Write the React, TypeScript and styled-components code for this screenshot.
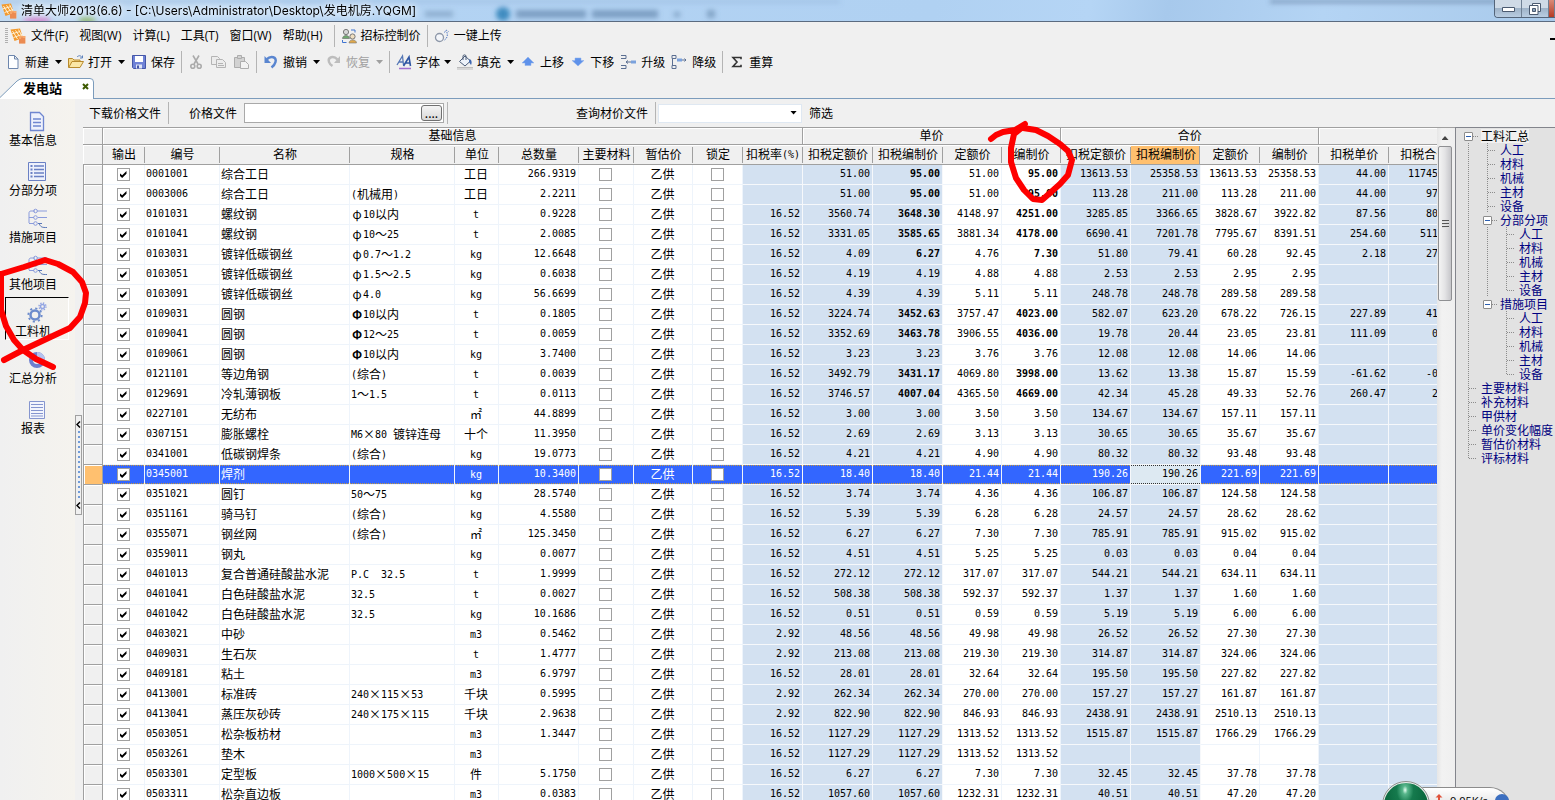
import React from "react";
import styled, { createGlobalStyle, css } from "styled-components";

const CJK = `"Noto Sans CJK SC", "Noto Sans", sans-serif`;
const UI = `"Open Sans", "Noto Sans CJK SC", sans-serif`;
const TITLE = `Inter, "Noto Sans CJK SC", sans-serif`;
const MONO = `"DejaVu Sans Mono", "Noto Sans CJK SC", monospace`;

const GlobalStyle = createGlobalStyle`
  *, *::before, *::after { box-sizing: border-box; }
  body { margin: 0; background: #f0f0f0; color: #000; font: 12px/16px ${CJK}; }
  button, input, select { font: inherit; color: inherit; margin: 0; }
  button { border: 0; padding: 0; background: none; white-space: nowrap; }
`;

const Window = styled.div`
  position: relative;
  display: flex;
  flex-direction: column;
  height: 100vh;
  overflow: hidden;
`;

/* ---------- title bar ---------- */
const TitleBar = styled.header`
  position: relative;
  display: flex;
  flex: none;
  height: 22px;
  overflow: hidden;
  border-bottom: 1px solid #5b6b80;
  background: linear-gradient(100deg, #c3dbf2 0%, #b3d3f3 25%, #b0d1f2 60%, #b5d5f5 70%, #a7c9ec 75%, #b4d4f4 85%, #a9caeb 100%);
`;
const Backdrop = styled.svg`
  position: absolute;
  inset: 0;
  width: 100%;
  height: 22px;
`;
const TitleText = styled.h1`
  position: relative;
  flex: 1;
  display: flex;
  align-items: center;
  gap: 4px;
  margin: 0;
  padding-left: 1px;
  font: 12px/20px ${TITLE};
  text-shadow: 0 0 6px #fff, 0 0 8px #fff;
`;
const WindowButtons = styled.div`
  position: relative;
  display: flex;
  height: 18px;
  border: 1px solid #54657a;
  border-width: 0 0 1px 1px;
  border-radius: 0 0 0 4px;
  overflow: hidden;
`;
const WindowButton = styled.button<{ $close?: boolean }>`
  width: ${(p) => (p.$close ? 6 : 27)}px;
  display: flex;
  align-items: center;
  justify-content: center;
  border-right: 1px solid #6f8094;
  background: ${(p) =>
    p.$close ? "linear-gradient(#d98a78, #b53a24)" : "linear-gradient(#cfdae6 45%, #9fb3c8 50%, #b9cde2)"};
`;

/* ---------- menus and toolbars ---------- */
const MenuBar = styled.nav`
  display: flex;
  flex: none;
  align-items: center;
  gap: 11px;
  height: 27px;
  padding-left: 5px;
  font-family: ${UI};
`;
const MenuLead = styled.span`
  display: flex;
  gap: 2px;
  margin-right: -6px;
`;
const Grip = styled.span`
  width: 3px;
  height: 16px;
  background: repeating-linear-gradient(#b0b0b0 0 1px, transparent 1px 2px);
`;
const MenuItem = styled.button`
  display: flex;
  align-items: center;
  gap: 4px;
  line-height: 18px;
`;
const MenuGroup = styled.span`
  display: flex;
  align-items: center;
  gap: 6px;
`;
const Minimised = styled.span`
  width: 5px;
  height: 2px;
  margin: 6px 0 0 auto;
  background: #000;
`;
const Separator = styled.span<{ $near?: boolean }>`
  flex: none;
  width: 1px;
  height: 22px;
  margin-left: ${(p) => (p.$near ? -4 : 0)}px;
  background: #b4b4b4;
`;
const ToolBar = styled.div`
  display: flex;
  flex: none;
  align-items: center;
  gap: 6px;
  height: 26px;
  margin-bottom: 1px;
  padding-left: 5px;
`;
const Tool = styled.button`
  display: flex;
  align-items: center;
  gap: 4px;
  line-height: 18px;
  &:disabled { color: #a0a0a0; }
`;
const Arrow = styled.span<{ $tight?: boolean }>`
  width: 7px;
  height: 4px;
  margin-left: ${(p) => (p.$tight ? 0 : 2)}px;
  background: currentColor;
  clip-path: polygon(0 0, 7px 0, 50% 4px);
`;

/* ---------- document tab ---------- */
const TabRow = styled.div`
  display: flex;
  flex: none;
  align-items: flex-end;
  height: 23px;
`;
const Tab = styled.div`
  display: grid;
  width: 94px;
  height: 21px;
  & > * { grid-area: 1 / 1; }
`;
const TabFace = styled.div`
  display: flex;
  align-items: center;
  justify-content: space-between;
  padding: 0 5px 2px 23px;
`;
const TabTitle = styled.button`
  font-weight: 700;
  font-size: 13px;
  line-height: 18px;
`;
const TabClose = styled.button`
  display: flex;
  padding-bottom: 3px;
`;
const TabLine = styled.div`
  flex: 1;
  border-bottom: 1px solid #7c9cbc;
`;

/* ---------- body ---------- */
const Body = styled.div`
  display: flex;
  flex: 1;
  min-height: 0;
`;
const SideBar = styled.aside`
  display: flex;
  flex-direction: column;
  flex: none;
  width: 75px;
  padding: 7px 6px 0 5px;
  background: linear-gradient(90deg, #f0f0f0, #f5f3ee);
`;
const SideItem = styled.button<{ $active?: boolean; $spaced?: boolean }>`
  display: flex;
  flex-direction: column;
  align-items: center;
  justify-content: flex-end;
  flex: none;
  height: 43px;
  margin-bottom: ${(p) => (p.$spaced ? 7 : 4)}px;
  padding-right: 8px;
  border: 1px solid transparent;
  ${(p) =>
    p.$active &&
    css`
      border-color: #000 #fff #fff #000;
    `}
  & > svg { margin-left: 8px; }
`;
const Splitter = styled.div`
  flex: none;
  width: 8px;
  padding-top: 316px;
`;
const SplitHandle = styled.button`
  display: flex;
  flex-direction: column;
  align-items: center;
  justify-content: space-between;
  width: 7px;
  height: 100px;
  padding: 5px 0;
  border: 1px solid #a0a0a0;
`;
const SplitDots = styled.span`
  width: 2px;
  height: 68px;
  background: repeating-linear-gradient(#6f9bd8 0 2px, transparent 2px 5px);
`;
const Main = styled.main`
  display: flex;
  flex-direction: column;
  flex: 1;
  min-width: 0;
`;
const FilterBar = styled.form`
  display: flex;
  flex: none;
  align-items: center;
  height: 28px;
  padding-left: 6px;
  gap: 7px;
`;
const FileField = styled.span`
  display: flex;
  width: 200px;
  height: 20px;
  border: 1px solid #a9a9a9;
  background: #fff;
`;
const FileInput = styled.input`
  flex: 1;
  min-width: 0;
  border: 0;
  padding: 0 3px;
  background: none;
  outline: 0;
`;
const Browse = styled.button`
  width: 21px;
  margin: 1px;
  border: 1px solid #707070;
  border-radius: 3px;
  background: linear-gradient(#f4f4f4, #d8d8d8);
  line-height: 12px;
`;
const FieldLabel = styled.label<{ $indent?: number }>`
  margin-left: ${(p) => p.$indent || 0}px;
`;
const PlainButton = styled.button`
  line-height: 16px;
`;
const Combo = styled.span`
  display: grid;
  align-items: center;
  width: 144px;
  height: 19px;
  margin-left: -5px;
  & > * { grid-area: 1 / 1; }
`;
const ComboSelect = styled.select`
  width: 100%;
  height: 100%;
  appearance: none;
  border: 1px solid #dfe8f2;
  background: #fff;
`;
const ComboArrow = styled.span`
  justify-self: end;
  width: 9px;
  height: 5px;
  margin-right: 4px;
  background: #000;
  clip-path: polygon(1px 0, 8px 0, 50% 4px);
  pointer-events: none;
`;

/* ---------- grid ---------- */
const GridRow = styled.div`
  display: flex;
  flex: 1;
  min-height: 0;
`;
const GridPane = styled.div`
  flex: 1;
  min-width: 0;
  overflow: hidden;
  border: 1px solid #a0a0a0;
  border-width: 1px 0 0 0;
`;
const Table = styled.table`
  width: 1376px;
  table-layout: fixed;
  border-collapse: separate;
  border-spacing: 0;
  white-space: nowrap;
`;
const GroupHead = styled.th`
  height: 17px;
  padding: 0 0 2px;
  border: 1px solid #a0a0a0;
  border-width: 0 1px 1px 0;
  background: #f0f0f0;
  box-shadow: inset 1px 1px #fff;
  font-weight: 400;
  line-height: 14px;
`;
const Head = styled.th<{ $active?: boolean }>`
  height: 20px;
  padding: 0 0 2px;
  border-bottom: 1px solid #a0a0a0;
  background: #f0f0f0 linear-gradient(#a0a0a0, #a0a0a0) right 2px / 1px 16px no-repeat;
  box-shadow: inset 0 1px #fff;
  font-weight: 400;
  line-height: 17px;
  ${(p) =>
    p.$active &&
    css`
      background: #ffc06f linear-gradient(90deg, #a0a0a0 1px, #f0f0f0 1px) right / 2px 100% no-repeat;
    `}
`;
const Corner = styled(GroupHead)`
  height: 20px;
`;
const Selector = styled.th<{ $on: boolean }>`
  height: 20px;
  padding: 0;
  border: 1px solid #a0a0a0;
  border-width: 0 1px 1px 1px;
  background: ${(p) => (p.$on ? "#ffc06f" : "#f0f0f0")};
  box-shadow: inset 1px 1px #fff;
`;
const BodyRow = styled.tr<{ $on: boolean }>`
  ${(p) => p.$on && "color: #fff;"}
`;
const Cell = styled.td<{
  $align?: string;
  $tint?: boolean;
  $on?: boolean;
  $focus?: boolean;
  $num?: boolean;
  $bold?: boolean;
}>`
  height: 20px;
  padding: 0 2px 2px 1px;
  overflow: hidden;
  border: 1px solid ${(p) => (p.$tint ? "#f6f8fb" : "#eef4fb")};
  border-width: 0 1px 1px 0;
  text-align: ${(p) => p.$align || "left"};
  line-height: 17px;
  background: ${(p) => (p.$tint ? "#d3e1f1" : "#fff")};
  ${(p) =>
    p.$num &&
    css`
      font-family: ${MONO};
      font-size: 10px;
    `}
  ${(p) => p.$bold && "font-weight: 700;"}
  ${(p) =>
    p.$on &&
    css`
      background:
        repeating-linear-gradient(90deg, #c89a3c 0 1px, #3366ff 1px 2px) top / 100% 1px no-repeat,
        repeating-linear-gradient(90deg, #c89a3c 0 1px, #3366ff 1px 2px) bottom / 100% 1px no-repeat,
        #3366ff;
      background-clip: padding-box;
    `}
  ${(p) =>
    p.$focus &&
    css`
      color: #000;
      background:
        repeating-linear-gradient(90deg, #333 0 1px, #dde9f2 1px 2px) top / 100% 1px no-repeat,
        repeating-linear-gradient(90deg, #333 0 1px, #dde9f2 1px 2px) bottom / 100% 1px no-repeat,
        #dde9f2;
    `}
`;
const CheckCell = styled(Cell)`
  padding: 0 1px 0 0;
`;
const Half = styled.span`
  font-family: ${MONO};
  font-size: 10px;
  line-height: 1;
  white-space: pre;
  vertical-align: 1px;
`;
const Full = styled.span<{ $bold?: boolean }>`
  display: inline-block;
  width: 12px;
  line-height: 1;
  text-align: center;
  font-weight: ${(p) => (p.$bold ? 700 : 400)};
`;
const Check = styled.input`
  display: block;
  appearance: none;
  width: 13px;
  height: 13px;
  margin: 0 auto;
  border: 1px solid #a0a0a0;
  background: #fff;
  &:checked::before {
    content: "";
    display: block;
    width: 7px;
    height: 7px;
    margin: 2px;
    background: #000;
    clip-path: polygon(0 28%, 38% 62%, 100% 0, 100% 38%, 38% 100%, 0 66%);
  }
`;

const ScrollBar = styled.div`
  display: flex;
  flex-direction: column;
  align-items: center;
  flex: none;
  width: 18px;
  padding: 8px 3px 0 1px;
  border-top: 1px solid #a0a0a0;
  background: linear-gradient(90deg, #e6e6e6, #f2f2f2 5px, #efefef);
`;
const ScrollArrow = styled.span`
  width: 7px;
  height: 4px;
  margin-bottom: 6px;
  background: #444;
  clip-path: polygon(50% 0, 100% 100%, 0 100%);
`;
const ScrollThumb = styled.div`
  display: flex;
  align-items: center;
  justify-content: center;
  width: 14px;
  height: 155px;
  border: 1px solid #8f9093;
  border-radius: 2px;
  background: linear-gradient(90deg, #f4f4f4, #e3e3e5 50%, #c6c6ca);
`;
const ThumbGrip = styled.span`
  width: 7px;
  height: 8px;
  background: repeating-linear-gradient(#555 0 1px, #ddd 1px 2px, transparent 2px 3px);
`;

/* ---------- tree ---------- */
const TreePane = styled.aside`
  flex: none;
  width: 100px;
  margin-top: 28px;
  padding: 1px 0 0 6px;
  overflow: hidden;
  border: 1px solid #83858c;
  border-width: 1px 0 0 1px;
  background: #e2e2e2;
`;
const TreeList = styled.ul`
  margin: 0;
  padding: 0;
  list-style: none;
`;
const TreeRow = styled.li`
  display: flex;
  height: 14px;
`;
const dotsDown = "repeating-linear-gradient(#8c8c8c 0 1px, transparent 1px 2px)";
const dotsAcross = "repeating-linear-gradient(90deg, #8c8c8c 0 1px, transparent 1px 2px)";
const Guide = styled.span<{ $kind: string }>`
  display: flex;
  align-items: center;
  flex: none;
  width: 19px;
  padding-left: 2px;
  background-repeat: no-repeat;
  ${(p) =>
    p.$kind === "|" && `background-image: ${dotsDown}; background-size: 1px 100%; background-position: 6px 0;`}
  ${(p) =>
    p.$kind === "+" &&
    `background-image: ${dotsDown}, ${dotsAcross}; background-size: 1px 100%, 8px 1px; background-position: 6px 0, 7px 7px;`}
  ${(p) =>
    p.$kind === "L" &&
    `background-image: ${dotsDown}, ${dotsAcross}; background-size: 1px 8px, 8px 1px; background-position: 6px 0, 7px 7px;`}
  ${(p) =>
    p.$kind === "o" &&
    `background-image: ${dotsAcross}; background-size: 6px 1px; background-position: 11px 7px;`}
`;
const Expander = styled.button`
  display: flex;
  align-items: center;
  justify-content: center;
  width: 9px;
  height: 9px;
  border: 1px solid #8c8c8c;
  border-radius: 1px;
  background: #fff;
  &::before { content: ""; width: 5px; height: 1px; background: #2c5fb0; }
`;
const TreeLabel = styled.a<{ $root?: boolean }>`
  color: ${(p) => (p.$root ? "#000" : "#000080")};
  background: ${(p) => (p.$root ? "#f0f0f0" : "none")};
  text-decoration: none;
  white-space: nowrap;
  line-height: 14px;
`;

/* ---------- overlays ---------- */
const PenLayer = styled.svg`
  position: absolute;
  top: 0;
  left: 0;
  width: 1100px;
  height: 400px;
  pointer-events: none;
`;
const NetMeter = styled.div`
  position: absolute;
  right: 43px;
  bottom: -29px;
  display: flex;
  align-items: flex-start;
  width: 130px;
  height: 48px;
`;
const MeterBall = styled.span`
  position: relative;
  flex: none;
  width: 48px;
  height: 48px;
  border: 2px solid #e8ecea;
  border-radius: 50%;
  outline: 1px solid #8a8f8c;
  outline-offset: -1px;
  background: radial-gradient(ellipse at 48% 16%, #e6fff2 0, #58b78c 8%, #157a4d 26%, #0c6a40 60%);
`;
const MeterPill = styled.span`
  display: flex;
  flex: 1;
  gap: 7px;
  height: 40px;
  margin: 6px 8px 0 -12px;
  padding: 5px 0 0 17px;
  border: 1px solid #8c8c8c;
  border-left: 0;
  border-radius: 0 20px 20px 0;
  background: linear-gradient(#fff, #dcdcdc 60%);
  font: 11px/16px "Open Sans", sans-serif;
`;

/* ---------- icons ---------- */
const AppIcon = () => (
  <svg width="16" height="16" viewBox="0 0 16 16">
    <path d="M.5 1.500 10 .5l3 9.500L4.500 13z" fill="#f39a2d" />
    <path d="M2.500 3l5 8M5.500 2.300l5 7.500M8.500 1.600 12 8M1.500 6 10 3.500M3.500 9.500l8.500-3" stroke="#fff0d0" strokeWidth="1" />
    <path d="M9 8h6.500v7.500H9z" fill="#f7a76a" />
    <path d="M10 15.500V11M12 15.500v-6M14 15.500V10" stroke="#e0703a" strokeWidth="1" />
  </svg>
);
const I: Record<string, React.ReactNode> = {
  new: <path d="M3.500 1.500h6l3.500 3.500v9.500H3.500z M9.500 1.500V5H13" fill="#fdfeff" stroke="#6d86ad" />,
  open: (
    <>
      <path d="M.5 13.500v-9h4l1.500 1.500h6v2" fill="#f5d98a" stroke="#b88a2c" />
      <path d="M.7 13.500 4 7.500h11.500l-3.500 6z" fill="#fbe7a6" stroke="#b88a2c" />
      <path d="M9 3c2-2 4-1.500 5 .5M14.500 1.500v2.500h-2.500" fill="none" stroke="#5b80bd" />
    </>
  ),
  save: (
    <>
      <path d="M1.500 1.500h13v13h-12l-1-1z" fill="#6f82d6" stroke="#4456a8" />
      <path d="M4 2h8v6H4z" fill="#fff" />
      <path d="M5 10.500h6v4H5z" fill="#dfe4f5" />
      <path d="M6 11.500h2v3H6z" fill="#4456a8" />
    </>
  ),
  cut: (
    <g fill="none" stroke="#ababab" strokeWidth="1.600">
      <path d="M5 1.500 10 10M11 1.500 6 10" />
      <circle cx="4.800" cy="12.200" r="2" />
      <circle cx="11.200" cy="12.200" r="2" />
    </g>
  ),
  copy: (
    <g fill="#ececec" stroke="#b4b4b4">
      <path d="M1.500 2.500h6l2 2v6h-8z" />
      <path d="M6.500 5.500h6l3 3v5h-9z M8 9.500h5M8 11.500h6" />
    </g>
  ),
  paste: (
    <g fill="#d2d2d2" stroke="#adadad">
      <path d="M1.500 3.500h10v10h-10z" />
      <path d="M4.500 1.500h4v3h-4z" />
      <path d="M7.500 7.500h5l3 3v4h-8z" fill="#f2f2f2" />
    </g>
  ),
  undo: (
    <>
      <path d="M3.500 5.500C8 1 14 3 12.500 8c-.6 2.500-2 4-4 5.500" fill="none" stroke="#5a86d0" strokeWidth="2.500" />
      <path d="M1.500 2v7h6.500z" fill="#5a86d0" />
    </>
  ),
  redo: (
    <>
      <path d="M11.500 5.500C7.500 1 1.500 3 3 8c.6 2 2 3 3.500 4" fill="none" stroke="#bdbdbd" strokeWidth="2.500" />
      <path d="M14 2v7H8z" fill="#bdbdbd" />
    </>
  ),
  font: (
    <>
      <path d="M1 11 6.500 2l1 9M3 8h4" fill="none" stroke="#5577b5" strokeWidth="1.300" />
      <path d="M7.500 12 13 3l1.500 9M9.500 9H14" fill="none" stroke="#2f56a3" strokeWidth="1.600" />
      <path d="M3 14.500h12" stroke="#a06fd0" strokeWidth="1.500" />
    </>
  ),
  fill: (
    <>
      <path d="M2.500 7.500 8 2l5.500 5L8 12z" fill="#eef3fa" stroke="#4c5d78" />
      <path d="M6 6V2c0-1.500 3-1.500 3 0v4" fill="none" stroke="#4c5d78" />
      <path d="M12.500 5c2.500 1 2.500 4 1.500 6l-2-3z" fill="#3d66b0" />
      <path d="M.5 13.500h15M.5 15h15" stroke="#8a8a8a" strokeDasharray="1 1" />
    </>
  ),
  up: <path d="M8 3l6 6h-3v2.500H5V9H2z" fill="#5f92ea" stroke="#8fb0ec" strokeWidth=".5" />,
  down: <path d="M8 12 2 6.500h3V4h6v2.500h3z" fill="#5f92ea" stroke="#8fb0ec" strokeWidth=".5" />,
  promote: (
    <>
      <path d="M1 1.500h5v3H1M1 11.500h5v3H1M6 8h5M8 6.500 6 8l2 1.500" fill="none" stroke="#5b6f92" />
      <path d="M11 6.500h5v3h-5z" fill="#7ba2dd" />
    </>
  ),
  demote: (
    <>
      <path d="M1 1.500h4v3H1zM1 11.500h4v3H1zM1.500 5v6M11 6h4M13.500 4.500 15 6l-1.500 1.500" fill="none" stroke="#5b6f92" />
      <path d="M6 4.500h5v3H6z" fill="#7ba2dd" />
    </>
  ),
  sum: <path d="M12 5.200V3.500H4L8 8l-4 4.500h8v-1.700" fill="none" stroke="#333" strokeWidth="1.600" />,
  people: (
    <>
      <circle cx="5" cy="4" r="2.600" fill="#d8d8d8" stroke="#777" />
      <path d="M1.500 10.500c0-4 7-4 7 0z" fill="#6fa86f" stroke="#666" strokeWidth=".6" />
      <circle cx="11.500" cy="8.500" r="2.600" fill="#f0dfc0" stroke="#777" />
      <path d="M8 15c0-4 7.500-4 7.500 0z" fill="#e0a94c" stroke="#777" strokeWidth=".6" />
      <path d="M10 2h4v2.500M1.500 12v2.500h4" fill="none" stroke="#3f74d0" />
    </>
  ),
  upload: (
    <>
      <circle cx="5.500" cy="9.500" r="4" fill="#f4f6fa" stroke="#8d97a8" strokeWidth="1.300" />
      <path d="M10.500 12c3-2 3.500-5 2-9M10.500 4.500l1.500-2.500 2.500 1.500" fill="none" stroke="#4f78c4" strokeDasharray="1.500 1" />
    </>
  ),
};
const Icon = ({ name, w = 16 }: { name: string; w?: number }) => (
  <svg width={w} height="16" viewBox={`0 0 ${w} 16`}>
    {I[name]}
  </svg>
);

const branch = (
  <g fill="none" stroke="#8a9bdc">
    <path d="M8 3H4c-1.500 0-2 1-2 2v10M2 9.500h5M2 15.500h5M10 3h10M11 9.500h9" />
    <path d="M12 15.500c2 4 3 4 8 4M11 15.500h4" stroke="#5a78b8" />
    <circle cx="8.500" cy="3" r="1.800" />
    <circle cx="8.500" cy="9.500" r="1.800" />
    <circle cx="8.500" cy="15.500" r="1.800" />
  </g>
);
const S: Record<string, React.ReactNode> = {
  page: (
    <g fill="none" stroke="#6f86d0" strokeWidth="1.300">
      <path d="M3.500 1.500h9l4 4v14h-13z" fill="#eef1fc" />
      <path d="M6 8h8M6 11.500h8M6 15h8" />
    </g>
  ),
  list: (
    <g fill="none" stroke="#6a80c4">
      <path d="M1.500 1.500h17v18h-17z" fill="#eef1fc" />
      <path d="M7 5h10M7 8.500h10M7 12h10M7 15.500h10" strokeWidth="1.500" />
      <path d="M3.500 5h2M3.500 8.500h2M3.500 12h2M3.500 15.500h2" strokeWidth="2" />
    </g>
  ),
  branch,
  gears: (
    <g fill="none">
      <circle cx="8" cy="13" r="4.500" stroke="#6d8ccc" strokeWidth="2.500" />
      <circle cx="8" cy="13" r="6.700" stroke="#6d8ccc" strokeWidth="1.800" strokeDasharray="2.200 3.060" />
      <circle cx="15.500" cy="4.500" r="2" stroke="#93a5e2" strokeWidth="1.500" />
      <circle cx="15.500" cy="4.500" r="3.500" stroke="#93a5e2" strokeWidth="1.400" strokeDasharray="1.400 1.350" />
    </g>
  ),
  ring: (
    <g fill="none">
      <circle cx="10" cy="11" r="6" stroke="#6f7fce" strokeWidth="4" />
      <path d="M10 5a6 6 0 0 1 6 6" stroke="#b5c2ee" strokeWidth="4" />
    </g>
  ),
  report: (
    <g stroke="#8595cf">
      <path d="M2.500 2.500h15v17h-15z" fill="#f3f5fd" />
      <path d="M4 5.500h12M4 8.500h12M4 11.500h12M4 14.500h12M4 17h12" />
    </g>
  ),
};

const sideItems = [
  { label: "基本信息", icon: "page", spaced: true },
  { label: "分部分项", icon: "list" },
  { label: "措施项目", icon: "branch" },
  { label: "其他项目", icon: "branch" },
  { label: "工料机", icon: "gears", active: true },
  { label: "汇总分析", icon: "ring", spaced: true },
  { label: "报表", icon: "report" },
];

/* ---------- data ---------- */
const widths = [20, 42, 75, 130, 105, 44, 80, 55, 59, 50, 60, 70, 70, 59, 59, 70, 70, 59, 59, 70, 70];
const heads = [
  "输出", "编号", "名称", "规格", "单位", "总数量", "主要材料", "暂估价", "锁定", "扣税率(%)",
  "扣税定额价", "扣税编制价", "定额价", "编制价", "扣税定额价", "扣税编制价", "定额价", "编制价", "扣税单价", "扣税合价",
];

// code|name|spec|unit|quantity|rate|four unit prices|four totals|price difference|total difference; * marks an edited price
const data = `0001001|综合工日||工日|266.9319||51.00|*95.00|51.00|*95.00|13613.53|25358.53|13613.53|25358.53|44.00|11745.00
0003006|综合工日|(机械用)|工日|2.2211||51.00|*95.00|51.00|*95.00|113.28|211.00|113.28|211.00|44.00|97.72
0101031|螺纹钢|φ10以内|t|0.9228|16.52|3560.74|*3648.30|4148.97|*4251.00|3285.85|3366.65|3828.67|3922.82|87.56|80.80
0101041|螺纹钢|φ10～25|t|2.0085|16.52|3331.05|*3585.65|3881.34|*4178.00|6690.41|7201.78|7795.67|8391.51|254.60|511.37
0103031|镀锌低碳钢丝|φ0.7～1.2|kg|12.6648|16.52|4.09|*6.27|4.76|*7.30|51.80|79.41|60.28|92.45|2.18|27.61
0103051|镀锌低碳钢丝|φ1.5～2.5|kg|0.6038|16.52|4.19|4.19|4.88|4.88|2.53|2.53|2.95|2.95||
0103091|镀锌低碳钢丝|φ4.0|kg|56.6699|16.52|4.39|4.39|5.11|5.11|248.78|248.78|289.58|289.58||
0109031|圆钢|Φ10以内|t|0.1805|16.52|3224.74|*3452.63|3757.47|*4023.00|582.07|623.20|678.22|726.15|227.89|41.13
0109041|圆钢|Φ12～25|t|0.0059|16.52|3352.69|*3463.78|3906.55|*4036.00|19.78|20.44|23.05|23.81|111.09|0.66
0109061|圆钢|Φ10以内|kg|3.7400|16.52|3.23|3.23|3.76|3.76|12.08|12.08|14.06|14.06||
0121101|等边角钢|(综合)|t|0.0039|16.52|3492.79|*3431.17|4069.80|*3998.00|13.62|13.38|15.87|15.59|-61.62|-0.24
0129691|冷轧薄钢板|1～1.5|t|0.0113|16.52|3746.57|*4007.04|4365.50|*4669.00|42.34|45.28|49.33|52.76|260.47|2.94
0227101|无纺布||㎡|44.8899|16.52|3.00|3.00|3.50|3.50|134.67|134.67|157.11|157.11||
0307151|膨胀螺栓|M6×80 镀锌连母|十个|11.3950|16.52|2.69|2.69|3.13|3.13|30.65|30.65|35.67|35.67||
0341001|低碳钢焊条|(综合)|kg|19.0773|16.52|4.21|4.21|4.90|4.90|80.32|80.32|93.48|93.48||
0345001|焊剂||kg|10.3400|16.52|18.40|18.40|21.44|21.44|190.26|190.26|221.69|221.69||
0351021|圆钉|50～75|kg|28.5740|16.52|3.74|3.74|4.36|4.36|106.87|106.87|124.58|124.58||
0351161|骑马钉|(综合)|kg|4.5580|16.52|5.39|5.39|6.28|6.28|24.57|24.57|28.62|28.62||
0355071|钢丝网|(综合)|㎡|125.3450|16.52|6.27|6.27|7.30|7.30|785.91|785.91|915.02|915.02||
0359011|钢丸||kg|0.0077|16.52|4.51|4.51|5.25|5.25|0.03|0.03|0.04|0.04||
0401013|复合普通硅酸盐水泥|P.C  32.5|t|1.9999|16.52|272.12|272.12|317.07|317.07|544.21|544.21|634.11|634.11||
0401041|白色硅酸盐水泥|32.5|t|0.0027|16.52|508.38|508.38|592.37|592.37|1.37|1.37|1.60|1.60||
0401042|白色硅酸盐水泥|32.5|kg|10.1686|16.52|0.51|0.51|0.59|0.59|5.19|5.19|6.00|6.00||
0403021|中砂||m3|0.5462|2.92|48.56|48.56|49.98|49.98|26.52|26.52|27.30|27.30||
0409031|生石灰||t|1.4777|2.92|213.08|213.08|219.30|219.30|314.87|314.87|324.06|324.06||
0409181|粘土||m3|6.9797|16.52|28.01|28.01|32.64|32.64|195.50|195.50|227.82|227.82||
0413001|标准砖|240×115×53|千块|0.5995|2.92|262.34|262.34|270.00|270.00|157.27|157.27|161.87|161.87||
0413041|蒸压灰砂砖|240×175×115|千块|2.9638|2.92|822.90|822.90|846.93|846.93|2438.91|2438.91|2510.13|2510.13||
0503051|松杂板枋材||m3|1.3447|16.52|1127.29|1127.29|1313.52|1313.52|1515.87|1515.87|1766.29|1766.29||
0503261|垫木||m3||16.52|1127.29|1127.29|1313.52|1313.52||||||
0503301|定型板|1000×500×15|件|5.1750|16.52|6.27|6.27|7.30|7.30|32.45|32.45|37.78|37.78||
0503311|松杂直边板||m3|0.0383|16.52|1057.60|1057.60|1232.31|1232.31|40.51|40.51|47.20|47.20||`
  .split("\n")
  .map((line) => line.split("|"));

const SELECTED = "0345001";
const tinted = [true, true, true, false, false, true, true, false, false, true, true];

// Latin runs use the half-width face, symbols take a full-width slot.
const Mixed = ({ text }: { text: string }) => (
  <>
    {(text.match(/[\x20-\x7e]+|[φΦ×～]|[^\x20-\x7eφΦ×～]+/g) || []).map((run, i) =>
      /^[\x20-\x7e]/.test(run) ? (
        <Half key={i}>{run}</Half>
      ) : /^[φΦ×～]/.test(run) ? (
        <Full key={i} $bold={run === "Φ"}>{run}</Full>
      ) : (
        run
      )
    )}
  </>
);

const tree: [string, string][] = [
  ["o", "工料汇总"],
  ["|+", "人工"], ["|+", "材料"], ["|+", "机械"], ["|+", "主材"], ["|+", "设备"],
  ["|o", "分部分项"],
  ["||+", "人工"], ["||+", "材料"], ["||+", "机械"], ["||+", "主材"], ["||L", "设备"],
  ["|o", "措施项目"],
  ["| +", "人工"], ["| +", "材料"], ["| +", "机械"], ["| +", "主材"], ["| L", "设备"],
  ["+", "主要材料"], ["+", "补充材料"], ["+", "甲供材"], ["+", "单价变化幅度"], ["+", "暂估价材料"], ["L", "评标材料"],
];

const ToolButton = ({ icon, label, menu, tight, disabled, w }: {
  icon: string; label?: string; menu?: boolean; tight?: boolean; disabled?: boolean; w?: number;
}) => (
  <Tool type="button" disabled={disabled} aria-label={label || icon}>
    <Icon name={icon} w={w} />
    {label}
    {menu && <Arrow $tight={tight} />}
  </Tool>
);

const MaterialRow = ({ row }: { row: string[] }) => {
  const [code, name, spec, unit, qty, ...prices] = row;
  const on = code === SELECTED;
  return (
    <BodyRow $on={on}>
      <Selector $on={on} scope="row" />
      <CheckCell $on={on}><Check type="checkbox" defaultChecked aria-label={`输出 ${code}`} /></CheckCell>
      <Cell $on={on} $num>{code}</Cell>
      <Cell $on={on}>{name}</Cell>
      <Cell $on={on}><Mixed text={spec} /></Cell>
      <Cell $on={on} $align="center"><Mixed text={unit} /></Cell>
      <Cell $on={on} $num $align="right">{qty}</Cell>
      <CheckCell $on={on}><Check type="checkbox" aria-label={`主要材料 ${code}`} /></CheckCell>
      <Cell $on={on} $align="center">乙供</Cell>
      <CheckCell $on={on}><Check type="checkbox" aria-label={`锁定 ${code}`} /></CheckCell>
      {prices.map((value, i) => (
        <Cell
          key={i}
          $num
          $align="right"
          $tint={tinted[i]}
          $on={on}
          $focus={on && i === 6}
          $bold={value.startsWith("*")}
        >
          {value.replace("*", "")}
        </Cell>
      ))}
    </BodyRow>
  );
};

export default function App() {
  return (
    <Window>
      <GlobalStyle />
      <TitleBar>
        <Backdrop aria-hidden="true">
          <defs>
            <filter id="soft" x="-20%" y="-100%" width="140%" height="300%">
              <feGaussianBlur stdDeviation="2.500" />
            </filter>
          </defs>
          <g filter="url(#soft)">
            <path d="M0 0h840v3H0z" fill="#8fb0d4" opacity=".5" />
            <ellipse cx="37" cy="20" rx="14" ry="3" fill="#d07ac8" />
            <ellipse cx="87" cy="20" rx="9" ry="3" fill="#8fb86a" />
            <path d="M425 11h28v6h-28z" fill="#7f9fc2" opacity=".7" />
            <circle cx="503" cy="14" r="7" fill="#3f8cc0" />
            <path d="M516 10h70v8h-70zM592 10h66v8h-66z" fill="#6f92b8" opacity=".8" />
            <path d="M674 12h6v5h-6zM707 10h8v8h-8z" fill="#7898bc" opacity=".8" />
            <path d="M1270 0h230v3h-230z" fill="#5d7898" opacity=".7" />
          </g>
        </Backdrop>
        <TitleText>
          <AppIcon />
          清单大师2013(6.6) - [C:\Users\Administrator\Desktop\发电机房.YQGM]
        </TitleText>
        <WindowButtons>
          <WindowButton aria-label="最小化">
            <svg width="13" height="6"><path d="M.5 1.500h12v4H.5z" fill="#fff" stroke="#4b5a70" /></svg>
          </WindowButton>
          <WindowButton aria-label="还原">
            <svg width="12" height="12">
              <path d="M3.500.5h8v8h-8z" fill="#fff" stroke="#4b5a70" />
              <path d="M.5 2.500h8.500v9H.5z" fill="#fff" stroke="#4b5a70" />
              <path d="M3.500 5.500h3v3h-3z" fill="#8fa5bd" stroke="#4b5a70" />
            </svg>
          </WindowButton>
          <WindowButton $close aria-label="关闭" />
        </WindowButtons>
      </TitleBar>

      <MenuBar>
        <MenuLead><Grip /><AppIcon /></MenuLead>
        {["文件(F)", "视图(W)", "计算(L)", "工具(T)", "窗口(W)", "帮助(H)"].map((m) => (
          <MenuItem key={m}>{m}</MenuItem>
        ))}
        <MenuGroup>
          <Separator />
          <MenuItem><Icon name="people" />招标控制价</MenuItem>
          <Separator />
          <MenuItem><Icon name="upload" />一键上传</MenuItem>
        </MenuGroup>
        <Minimised />
      </MenuBar>

      <ToolBar>
        <ToolButton icon="new" label="新建" menu />
        <ToolButton icon="open" label="打开" menu />
        <ToolButton icon="save" label="保存" />
        <Separator />
        <ToolButton icon="cut" disabled />
        <ToolButton icon="copy" w={17} disabled />
        <ToolButton icon="paste" w={17} disabled />
        <Separator />
        <ToolButton icon="undo" label="撤销" menu />
        <ToolButton icon="redo" label="恢复" menu disabled />
        <Separator />
        <ToolButton icon="font" label="字体" menu tight />
        <ToolButton icon="fill" label="填充" menu />
        <ToolButton icon="up" label="上移" />
        <ToolButton icon="down" label="下移" />
        <ToolButton icon="promote" label="升级" w={17} />
        <ToolButton icon="demote" label="降级" w={17} />
        <Separator />
        <ToolButton icon="sum" label="重算" />
      </ToolBar>

      <TabRow>
        <Tab>
          <svg width="94" height="21" aria-hidden="true">
            <path d="M0 19.500 17 3q3-2.500 6-2.500h67q3.500 0 3.500 3.500v17H0z" fill="#fff" />
            <path d="M0 19.500 17 3q3-2.500 6-2.500h67q3.500 0 3.500 3.500v17" fill="none" stroke="#7c9cbc" />
          </svg>
          <TabFace>
            <TabTitle type="button">发电站</TabTitle>
            <TabClose type="button" aria-label="关闭">
              <svg width="7" height="7"><path d="M1 1l5 5M6 1 1 6" stroke="#3d5a00" strokeWidth="2" /></svg>
            </TabClose>
          </TabFace>
        </Tab>
        <TabLine />
      </TabRow>

      <Body>
        <SideBar>
          {sideItems.map((s) => (
            <SideItem key={s.label} type="button" $active={s.active} $spaced={s.spaced}>
              <svg width="20" height="21" viewBox="0 0 20 21">{S[s.icon]}</svg>
              {s.label}
            </SideItem>
          ))}
        </SideBar>
        <Splitter>
          <SplitHandle type="button" aria-label="折叠">
            <svg width="5" height="7"><path d="M4 .5 1 3.500l3 3" fill="none" stroke="#000" strokeWidth="1.500" /></svg>
            <SplitDots />
            <svg width="5" height="7"><path d="M4 .5 1 3.500l3 3" fill="none" stroke="#000" strokeWidth="1.500" /></svg>
          </SplitHandle>
        </Splitter>
        <Main>
          <FilterBar>
            <PlainButton type="button">下载价格文件</PlainButton>
            <Separator />
            <FieldLabel htmlFor="price-file" $indent={13}>价格文件</FieldLabel>
            <FileField>
              <FileInput id="price-file" />
              <Browse type="button">....</Browse>
            </FileField>
            <Separator $near />
            <FieldLabel htmlFor="query-file" $indent={121}>查询材价文件</FieldLabel>
            <Separator />
            <Combo>
              <ComboSelect id="query-file"><option aria-label="无" /></ComboSelect>
              <ComboArrow />
            </Combo>
            <PlainButton type="button">筛选</PlainButton>
          </FilterBar>
          <GridRow>
            <GridPane>
              <Table>
                <colgroup>
                  {widths.map((w, i) => <col key={i} width={w} />)}
                </colgroup>
                <thead>
                  <tr>
                    <GroupHead />
                    <GroupHead colSpan={10}>基础信息</GroupHead>
                    <GroupHead colSpan={4}>单价</GroupHead>
                    <GroupHead colSpan={4}>合价</GroupHead>
                    <GroupHead colSpan={2} />
                  </tr>
                  <tr>
                    <Corner />
                    {heads.map((h, i) => (
                      <Head key={i} $active={i === 15}><Mixed text={h} /></Head>
                    ))}
                  </tr>
                </thead>
                <tbody>
                  {data.map((row) => <MaterialRow key={row[0]} row={row} />)}
                </tbody>
              </Table>
            </GridPane>
            <ScrollBar>
              <ScrollArrow />
              <ScrollThumb><ThumbGrip /></ScrollThumb>
            </ScrollBar>
          </GridRow>
        </Main>
        <TreePane>
          <TreeList>
            {tree.map(([guides, label], i) => (
              <TreeRow key={i}>
                {guides.split("").map((g, j) => (
                  <Guide key={j} $kind={g}>
                    {g === "o" && <Expander type="button" aria-label="折叠" />}
                  </Guide>
                ))}
                <TreeLabel href="#" $root={i === 0}>{label}</TreeLabel>
              </TreeRow>
            ))}
          </TreeList>
        </TreePane>
      </Body>

      <NetMeter>
        <MeterBall />
        <MeterPill>
          <svg width="8" height="10"><path d="M4 1 7.500 4.500H5V10H3V4.500H.5z" fill="#e0523a" /></svg>
          0.05K/s
          <svg width="14" height="14"><circle cx="7" cy="8" r="7" fill="#3c6fc0" /></svg>
        </MeterPill>
      </NetMeter>

      <PenLayer viewBox="0 0 1100 400" aria-hidden="true">
        <g fill="none" stroke="#fe0000" strokeWidth="6" strokeLinecap="round" strokeLinejoin="round">
          <path d="M1 274 24 267 45 260 58 264 73 272 82 282 86 293 85 303 80 317 70 328 57 334 40 342 23 350 4 360" />
          <path d="M1 274 1 310 6 326 14 340 23 350 36 359 53 367" />
          <path d="M991 139 996 135 1003 132 1015 130 1025 124 1023 128 1036 130 1048 136 1060 144 1068 151 1072 160 1068 175 1060 184 1050 193 1042 200 1033 199 1024 190 1016 178 1011 162 1011 148 1014 134 1024 126" />
        </g>
      </PenLayer>
    </Window>
  );
}
